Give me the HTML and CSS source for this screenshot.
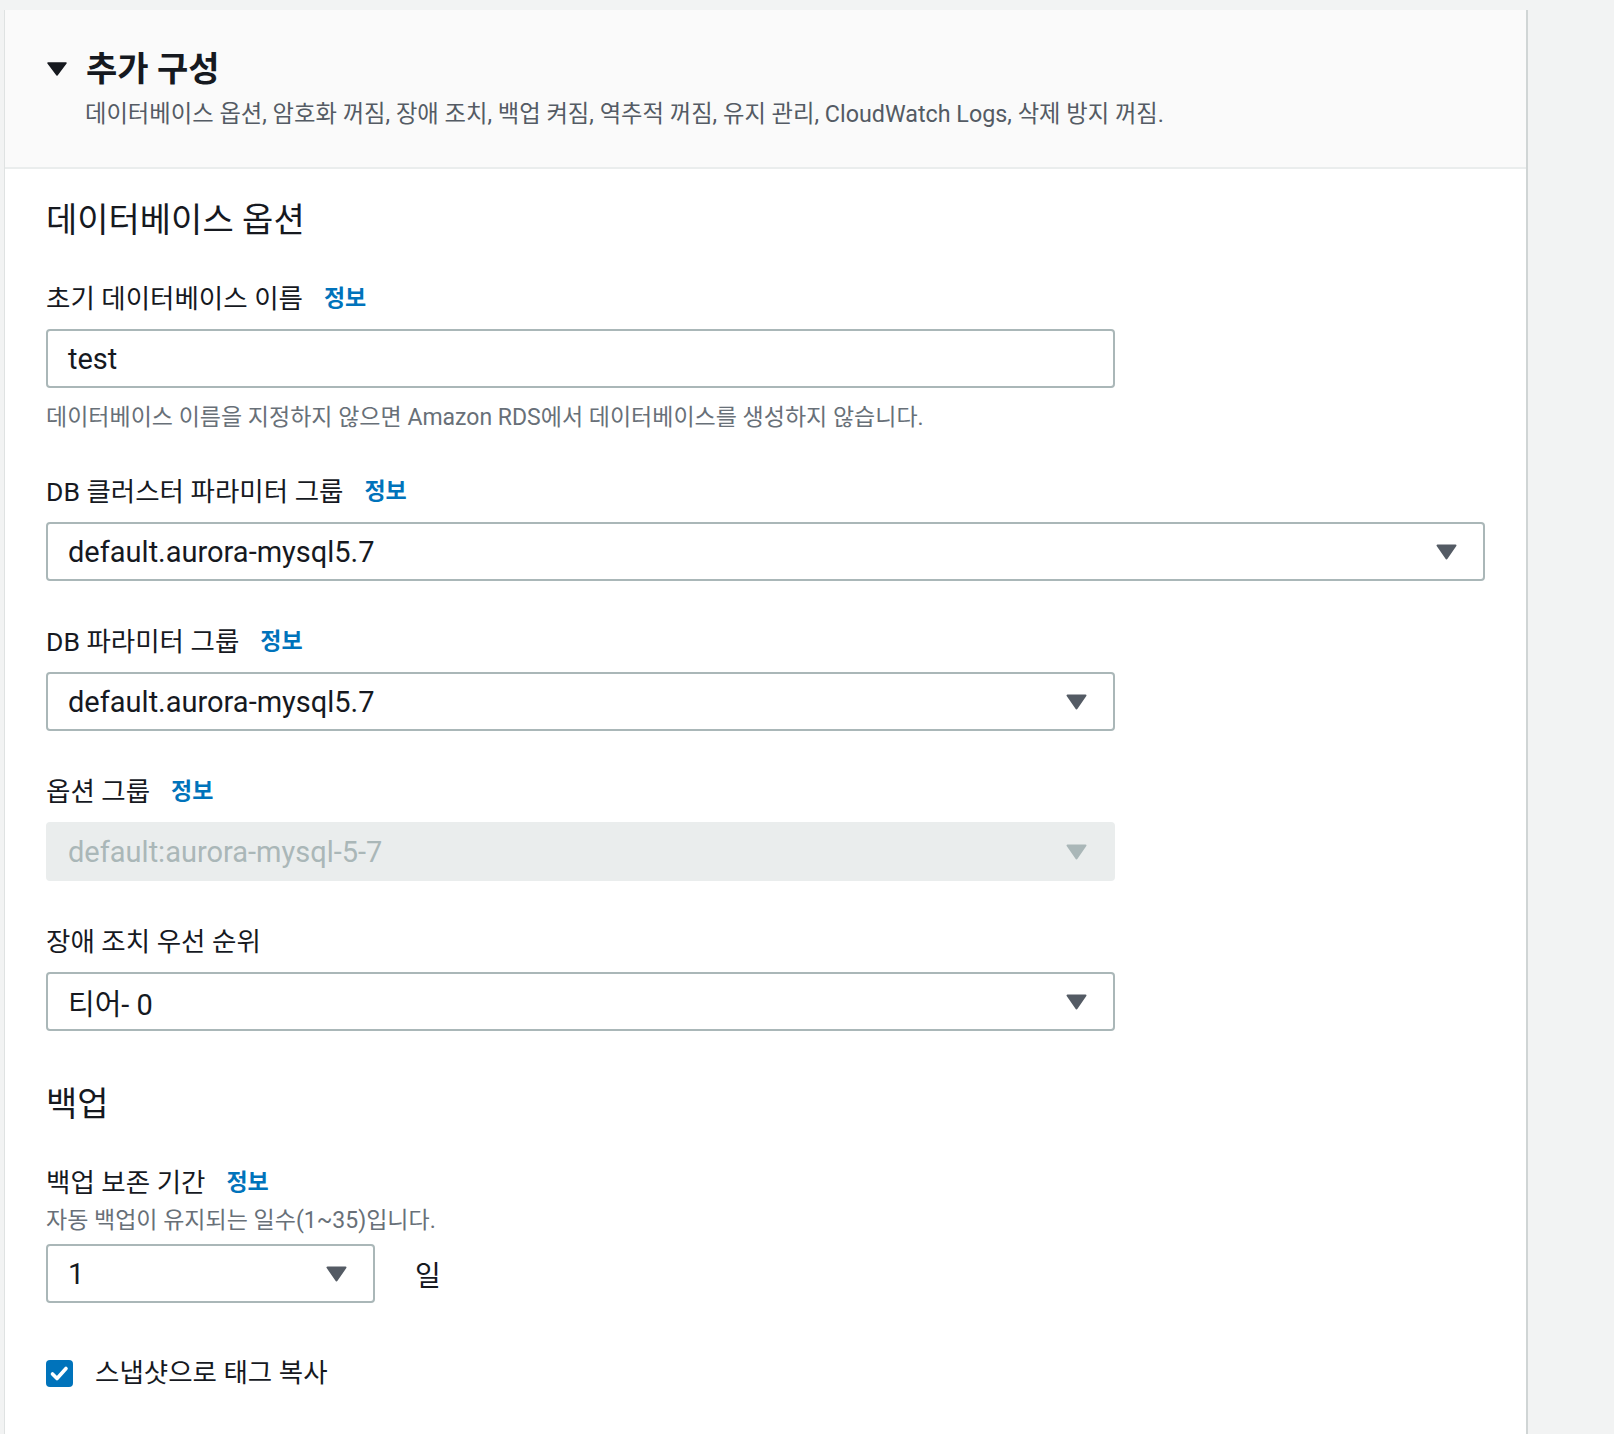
FILE: index.html
```html
<!DOCTYPE html>
<html lang="ko">
<head>
  <meta charset="UTF-8">
  <title>추가 구성 - RDS</title>
  <meta name="viewport" content="width=device-width, initial-scale=1.0">
  <link rel="stylesheet" href="styles.css">
</head>
<body>

  <section class="panel">
    <header class="panel-header">
      <div class="panel-title">
        <svg class="caret" width="20" height="14" viewBox="0 0 20 14"><path d="M1 1h18l-9 12z" fill="#16191f" stroke="#16191f" stroke-linejoin="round" stroke-width="1.5"/></svg>
        <h2>추가 구성</h2>
      </div>
      <p class="panel-desc">데이터베이스 옵션, 암호화 꺼짐, 장애 조치, 백업 켜짐, 역추적 꺼짐, 유지 관리, CloudWatch Logs, 삭제 방지 꺼짐.</p>
    </header>

    <div class="panel-body">
      <div class="section">
        <h3 class="section-title">데이터베이스 옵션</h3>

        <div class="field">
          <div class="field-label">초기 데이터베이스 이름 <a class="info">정보</a></div>
          <div class="control narrow">test</div>
          <p class="hint">데이터베이스 이름을 지정하지 않으면 Amazon RDS에서 데이터베이스를 생성하지 않습니다.</p>
        </div>

        <div class="field">
          <div class="field-label">DB 클러스터 파라미터 그룹 <a class="info">정보</a></div>
          <div class="control select wide">
            <span>default.aurora-mysql5.7</span>
            <svg class="arrow" width="21" height="16" viewBox="0 0 21 16"><path d="M1.5 1.5h18l-9 13z" fill="#545b64" stroke="#545b64" stroke-linejoin="round" stroke-width="2"/></svg>
          </div>
        </div>

        <div class="field">
          <div class="field-label">DB 파라미터 그룹 <a class="info">정보</a></div>
          <div class="control select narrow">
            <span>default.aurora-mysql5.7</span>
            <svg class="arrow" width="21" height="16" viewBox="0 0 21 16"><path d="M1.5 1.5h18l-9 13z" fill="#545b64" stroke="#545b64" stroke-linejoin="round" stroke-width="2"/></svg>
          </div>
        </div>

        <div class="field">
          <div class="field-label">옵션 그룹 <a class="info">정보</a></div>
          <div class="control select narrow disabled">
            <span>default:aurora-mysql-5-7</span>
            <svg class="arrow" width="21" height="16" viewBox="0 0 21 16"><path d="M1.5 1.5h18l-9 13z" fill="#aab7b8" stroke="#aab7b8" stroke-linejoin="round" stroke-width="2"/></svg>
          </div>
        </div>

        <div class="field">
          <div class="field-label">장애 조치 우선 순위</div>
          <div class="control select narrow">
            <span>티어- 0</span>
            <svg class="arrow" width="21" height="16" viewBox="0 0 21 16"><path d="M1.5 1.5h18l-9 13z" fill="#545b64" stroke="#545b64" stroke-linejoin="round" stroke-width="2"/></svg>
          </div>
        </div>
      </div>

      <div class="section backup">
        <h3 class="section-title">백업</h3>

        <div class="field">
          <div class="field-label">백업 보존 기간 <a class="info">정보</a></div>
          <p class="desc">자동 백업이 유지되는 일수(1~35)입니다.</p>
          <div class="inline-row">
            <div class="control select small">
              <span>1</span>
              <svg class="arrow" width="21" height="16" viewBox="0 0 21 16"><path d="M1.5 1.5h18l-9 13z" fill="#545b64" stroke="#545b64" stroke-linejoin="round" stroke-width="2"/></svg>
            </div>
            <span class="unit">일</span>
          </div>
        </div>

        <label class="checkbox-row">
          <span class="checkbox">
            <svg width="27" height="27" viewBox="0 0 27 27"><path d="M6.5 14l4.5 4.5 9-10" fill="none" stroke="#fff" stroke-width="3.6" stroke-linecap="round" stroke-linejoin="round"/></svg>
          </span>
          스냅샷으로 태그 복사
        </label>
      </div>
    </div>
  </section>

</body>
</html>
```

FILE: styles.css
```css
* {
  box-sizing: border-box;
}

body {
  margin: 0;
  background-color: #f2f3f3;
  font-family: Roboto, "Noto Sans CJK KR", sans-serif;
  color: #16191f;
}

.panel {
  width: 1524px;
  margin: 10px 0 0 4px;
  background-color: #fff;
  border-left: 1px solid #dfe2e2;
  border-right: 2px solid #d0d5d5;
  padding-bottom: 80px;
}

/* header */
.panel-header {
  background-color: #fafafa;
  border-bottom: 2px solid #eaeded;
  padding: 37px 40px 37px 42px;
}

.panel-title {
  display: flex;
  align-items: center;
  gap: 19px;
}

.panel-title h2 {
  margin: 0;
  font-size: 34px;
  line-height: 44px;
  font-weight: 700;
}

.panel-desc {
  margin: 7px 0 0 38px;
  font-size: 23.3px;
  line-height: 32px;
  color: #545b64;
}

/* body */
.panel-body {
  padding: 28px 40px 0 41px;
}

.section-title {
  margin: 0 0 36px;
  font-size: 34px;
  line-height: 46px;
  font-weight: 400;
}

.backup {
  margin-top: 50px;
}

.field {
  margin-bottom: 41px;
}

.field-label {
  display: flex;
  align-items: center;
  gap: 21px;
  font-size: 26.5px;
  line-height: 40px;
}

.info {
  font-size: 23px;
  font-weight: 700;
  color: #0073bb;
}

.control {
  margin-top: 10px;
  height: 59px;
  padding: 0 26px 0 20px;
  border: 2px solid #aab7b8;
  border-radius: 4px;
  display: flex;
  align-items: center;
  justify-content: space-between;
  font-size: 29px;
  background-color: #fff;
}

.narrow {
  width: 1069px;
}

.wide {
  width: 1439px;
}

.small {
  width: 329px;
}

.disabled {
  background-color: #eaeded;
  border-color: #eaeded;
  color: #aab7b8;
}

.hint {
  margin: 16px 0 0;
  font-size: 23px;
  line-height: 28px;
  color: #687078;
}

.field:first-of-type {
  margin-bottom: 40px;
}

.desc {
  margin: 2px 0 0;
  font-size: 23px;
  line-height: 32px;
  color: #687078;
}

.inline-row {
  display: flex;
  align-items: center;
  gap: 40px;
}

.inline-row .control {
  margin-top: 7px;
}

.unit {
  margin-top: 7px;
  font-size: 28px;
}

.checkbox-row {
  display: flex;
  align-items: center;
  gap: 22px;
  margin-top: 50px;
  font-size: 26.5px;
  line-height: 40px;
}

.checkbox {
  width: 27px;
  height: 27px;
  border-radius: 4px;
  background-color: #0073bb;
  display: flex;
}
```
